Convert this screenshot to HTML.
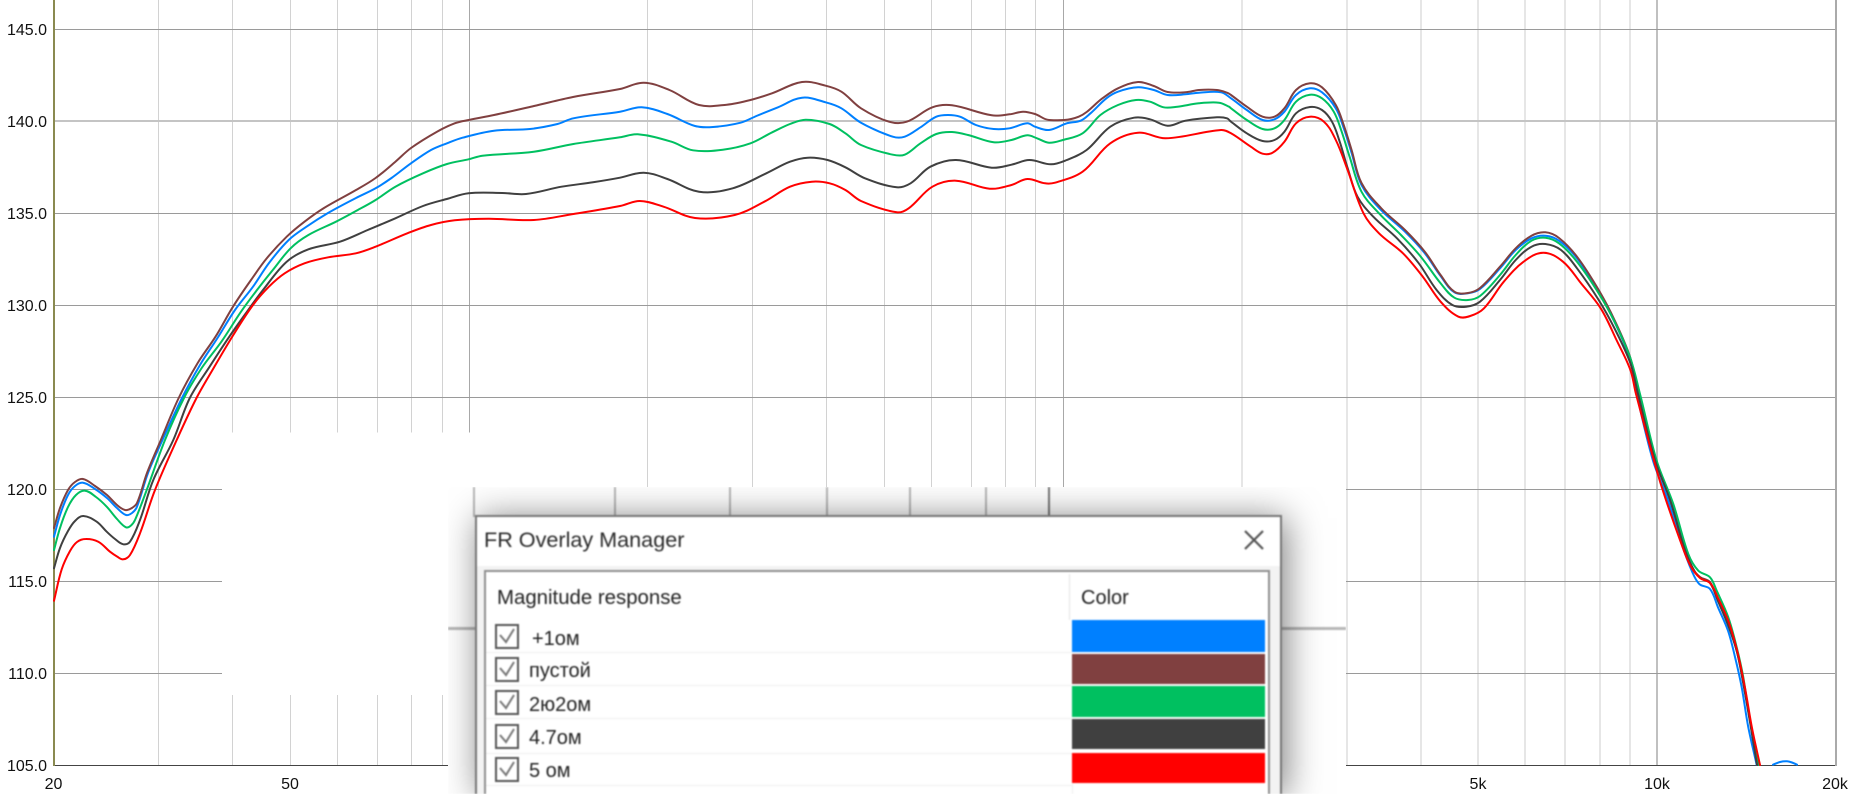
<!DOCTYPE html>
<html><head><meta charset="utf-8">
<style>
html,body{margin:0;padding:0;background:#fff;width:1851px;height:794px;overflow:hidden;font-family:"Liberation Sans",sans-serif}
#c{position:absolute;left:0;top:0}
#c text{font-family:"Liberation Sans",sans-serif;font-size:16px;fill:#111}
#b{position:absolute;left:448px;top:487px;width:898px;height:307px;overflow:hidden;background:#fff}
#bi{position:absolute;left:0;top:0;width:898px;height:307px;filter:blur(.7px);overflow:hidden}
.l{position:absolute;background:#b8b8b8}
#d{position:absolute;left:27px;top:28px;width:807px;height:279px;background:#fff;border:2px solid #777;border-bottom:0;box-sizing:border-box;box-shadow:4px 3px 34px rgba(0,0,0,.5)}
#s{position:absolute;left:0;top:49px;width:803px;height:228px;background:#f3f3f3}
#t{position:absolute;left:7px;top:10px;font-size:21.6px;line-height:25px;color:#2a2a2a;white-space:nowrap}
#list{position:absolute;left:7px;top:53px;width:786px;height:224px;background:#fff;border:2px solid #909090;border-bottom:0;box-sizing:border-box}
.tx{position:absolute;white-space:nowrap;color:#222}
.sw{position:absolute;left:586px;width:193px}
.sep{position:absolute;left:0;width:586px;height:1px;background:#eee}
.cb{position:absolute;left:9px;width:24px;height:25px;box-sizing:border-box;border:2px solid #555;background:#fff}
.cb svg{position:absolute;left:1px;top:1px}
</style></head><body>
<svg id="c" width="1851" height="794" viewBox="0 0 1851 794" xmlns="http://www.w3.org/2000/svg">
<g stroke="#d2d2d2" stroke-width="1" shape-rendering="crispEdges">
<path d="M158.5 0V765M232.5 0V765M290.5 0V765M337.5 0V765M377.5 0V765M411.5 0V765M442.5 0V765M647.5 0V765M752.5 0V765M826.5 0V765M884.5 0V765M931.5 0V765M971.5 0V765M1005.5 0V765M1035.5 0V765"/>
<path stroke="#a8a8a8" d="M469.5 0V765M1063.5 0V765"/>
</g>
<g stroke="#e6e6e6" stroke-width="2" shape-rendering="crispEdges">
<path d="M1242 0V765M1347 0V765M1421 0V765M1478 0V765M1525 0V765M1565 0V765M1600 0V765M1630 0V765"/>
<path stroke="#c0c0c0" d="M1657 0V765"/>
</g>
<g stroke="#9a9a9a" stroke-width="1" shape-rendering="crispEdges">
<path d="M54 29.5H1836M54 213.5H1836M54 305.5H1836M54 397.5H1836M54 489.5H1836M54 581.5H1836M54 673.5H1836"/>
<path stroke="#c4c4c4" stroke-width="2" d="M54 121H1836"/>
<path stroke="#444" stroke-width="1" d="M54 765.5H1836"/>
<path stroke="#8a8a50" stroke-width="2" d="M54 0V766"/>
<path stroke="#aaa" stroke-width="2" d="M1836 0V766"/>
</g>
<rect x="222" y="432.5" width="300" height="262.5" fill="#fff"/>
<g>
<text x="47" y="35" text-anchor="end">145.0</text>
<text x="47" y="127" text-anchor="end">140.0</text>
<text x="47" y="219" text-anchor="end">135.0</text>
<text x="47" y="311" text-anchor="end">130.0</text>
<text x="47" y="403" text-anchor="end">125.0</text>
<text x="47" y="495" text-anchor="end">120.0</text>
<text x="47" y="587" text-anchor="end">115.0</text>
<text x="47" y="679" text-anchor="end">110.0</text>
<text x="47" y="771" text-anchor="end">105.0</text>
<text x="53.5" y="789" text-anchor="middle">20</text>
<text x="290" y="789" text-anchor="middle">50</text>
<text x="1478" y="789" text-anchor="middle">5k</text>
<text x="1657" y="789" text-anchor="middle">10k</text>
<text x="1835" y="789" text-anchor="middle">20k</text>
</g>
<g id="curves" fill="none" stroke-width="2" stroke-linejoin="round" stroke-linecap="round">
<polyline stroke="#0080ff" points="54,536.7 60,515 68,495 75,486 83,482.7 95,489 107,498 117,508 126,515 132,513 137,506.7 148,473 161.7,441.7 182,398 200,365 217.5,338 235,310 253,286.7 269,263 288.7,240 306.5,226.7 328,213 356,198 375.6,188.3 391.5,178 411,163.3 431,150 447,143.3 462.6,137.7 494,130.7 530,129 557.5,124 573.4,118.3 620,111.7 641.7,107.3 667.4,114 695,126 713,127 740.6,122.7 756.4,116 778,107.3 802,97.7 825.6,102.3 841.4,108.3 861,122.7 892.8,136.7 904.7,136.7 920.5,127.3 936.3,116.7 948,115 960,116.7 975.9,125 993.7,129 1009.5,128.3 1027.3,123.3 1035,126.7 1049,130 1066.8,123.3 1080.6,120.7 1090.5,113.3 1106.4,98.3 1118,91.7 1138,87.3 1153.8,90 1167.6,95 1185.4,94.3 1199,92.7 1221,92.3 1231,98.3 1246.8,110 1262.6,120 1274.5,119.3 1284.4,111.7 1296,95 1310,88.3 1322,92.3 1335.8,108.3 1343.7,128 1351.6,153 1361.5,185 1381,210 1405,231.7 1424.8,253.3 1440.6,276 1454.4,292.3 1468,293.3 1480,289 1500,268.3 1515.7,250 1531.5,238.3 1545.4,235.7 1559,240.7 1577,258.3 1598.7,291.7 1614.5,321.7 1630.4,360 1636.7,394 1653,460.7 1667,497.3 1681.7,544 1691.7,570.7 1699.3,584 1710,589 1718,607.3 1728,630.7 1735,657 1741.7,687.3 1748.3,727.3 1756.7,765"/>
<polyline stroke="#0080ff" points="1773,764.7 1780,762 1787,761.3 1792,762.5 1797,764.7"/>
<polyline stroke="#804040" points="54,528 60,508 68,490 75,482 83,479 95,486 107,495 117,505 125,510 131,508.5 137,503 147,473 160,442 178.7,398 197.7,363 215.5,336.7 233,306.7 251,280 267,258 286.7,236.7 304.5,221.7 324,208 356,190 375.6,178 395.4,161.7 411,148 437,131.7 454.7,123.3 468.6,120 494,115 534,106 573,97 620,89 643.7,82.7 669.4,90 699,105 726.8,104.7 750.5,100 772,93.3 802,82 825.6,85.7 841.4,91.7 861,108.3 889,121.7 906.7,121.7 932.4,107.3 952,105.3 991.7,115.3 1009.5,114.3 1023,111.7 1035,114 1049,120 1078.7,116.7 1102.4,98.3 1118,88.3 1138,82 1153.8,86 1167.6,92 1185.4,92.3 1199,90 1217,90 1227,92.7 1231,95 1246.8,106.7 1262.6,116.7 1274.5,116.7 1284.4,108.3 1296,90 1310,83.3 1322,87.3 1335.8,105 1343.7,125 1351.6,150 1361.5,183 1381,208 1405,230 1424.8,251.7 1440.6,275 1454.4,291.7 1468,293 1480,288 1500,266.7 1515.7,248.3 1531.5,235.7 1545.4,232.3 1559,238 1577,256.7 1598.7,290 1614.5,320 1630.4,358 1638.3,394 1655,460.7 1670,497 1685,550.7 1693,569 1700,577 1710,582 1718,600.7 1728,624 1736.7,650.7 1743,680.7 1750,720.7 1758,765"/>
<polyline stroke="#00c060" points="54,550 60,528 68,507 76,495 85,490.7 96,497 106.7,506.7 117,519 126,527.3 131,525.5 135,520 146.7,490 165,440 184,398 201.7,368 221.4,341.7 241,311.7 257,290 272.8,270 290.6,248.3 308.4,235 336,221.7 357.8,210 375.6,200 395.4,186.7 423,173.3 447,164 468.6,159.3 482.4,155.7 533.8,151.7 573.4,144 620,137.3 637.8,134.3 671.4,141.7 693,150.3 722.8,149.7 750.5,143.3 772.2,132.3 790,124 805.8,119.7 829.6,124 845.4,133.3 861,145 892.8,154.7 904.7,154.7 920.5,143.3 936.3,134 952,132 968,135 993.7,142.3 1011.5,140 1027.3,135.3 1037,138.3 1049,142.7 1062.8,140 1082.6,133.3 1100.4,115 1118,105 1136,100 1150,101.7 1163.7,107.3 1177.5,106.7 1199,103.3 1219,102.7 1229,106.7 1231,108.3 1246.8,120 1262.6,129 1274.5,128.3 1284.4,120 1296,101.7 1310,94.7 1322,98.3 1333.8,111.7 1341.7,131.7 1349.6,156.7 1361.5,191.7 1379,213.3 1401,235 1420.8,256.7 1440.6,283.3 1454.4,297.7 1468,300 1480,296 1500,275 1515.7,255 1531.5,240.7 1545.4,237.7 1559,243.3 1577,261.7 1598.7,293.3 1614.5,321.7 1630.4,358.3 1640,394 1656.7,460.7 1673.3,504 1688.3,554 1698.3,570.7 1710,577.3 1716.7,590.7 1728.3,617.3 1736.7,647.3 1743.3,677.3 1750,720.7 1759,765"/>
<polyline stroke="#404040" points="54,568.3 60,548 68,531 75,521 83.3,516 96.7,521.7 106.7,531.7 115,539 123.3,544.3 130,541.7 140,520 153.3,480 173.3,440 189.8,398 209.6,366.7 229.3,336.7 247,311.7 263,290 286.7,261.7 308.4,249.3 340,241.7 367.7,230 395.4,218.3 423,206 446.8,199 468.6,193.3 502.2,193 526,194 561.5,186.7 593,182.3 620,177.7 643.7,172.7 667.4,179 699,191.7 732.7,188.3 766.3,173.3 790,161.7 807.8,157.7 827.6,160 845.4,167.3 865,178.3 896.8,187.3 910.6,183.3 930.4,166.7 956,160 991.7,167.7 1011.5,164.7 1029.3,160 1051,164.3 1066.8,160 1086.6,150 1110.3,126.7 1134,117.7 1150,119.3 1167.6,125.7 1185.4,120.7 1217,117.3 1227,118.3 1231,121.7 1246.8,133.3 1262.6,141 1274.5,140 1284.4,131.7 1296,113.3 1310,107 1322,110 1332,121.7 1339.7,141.7 1347.6,168 1357.5,196.7 1373.3,216.7 1397,238.3 1418.8,263.3 1436.6,290 1452.4,305 1466.3,306.7 1480,301.7 1500,280 1515.7,260 1531.5,246.7 1545.4,244 1561,250 1577,268.3 1598.7,300 1614.5,328.3 1630.4,363.3 1638,394 1655,460 1670,500 1685,550 1695,572 1702,579 1710,583 1718,601 1728,625 1737,652 1743,682 1750,722 1757,765"/>
<polyline stroke="#ff0000" points="54,600.7 61.7,569.3 70,551 77,542 85.7,539 98.3,541.7 110,551.7 117,556.5 123.3,559.3 130,555 140,533.3 155,490 176.7,440 196.5,398 213.5,368.3 233.3,335 253,305 268.9,286.7 284.7,273.3 304.5,263.3 328.2,257.3 355.9,253.3 375.6,246.7 407.3,233.3 431,225 454.7,220.3 488.3,218.7 533.8,220 573.4,214 620,206 639.8,201 663.5,206.7 695,218 734.7,215 764.3,201.7 790,186.7 811.8,181.7 829.6,183.3 845.4,190 861,201 896.8,212.3 908.7,208.3 932.4,186.7 956,180.7 989.7,188.7 1011.5,185 1027.3,179 1045,183.3 1055,182.7 1082.6,171.7 1110.3,143.3 1138,132.7 1165.7,138.3 1221,130 1231,133.3 1250.8,146.7 1262.6,153.7 1272.5,152.7 1284.4,141.7 1296,123.3 1310,116.7 1324,121.7 1335.8,140 1347.6,170 1363.5,213.3 1379,233.3 1403,253.3 1422.8,276.7 1440.6,301.7 1458.4,316.7 1470.2,316 1484,308.3 1503.8,281.7 1523.6,261.7 1543.4,252.7 1563,261.7 1581,283.3 1600.7,308.3 1616.5,340 1630.4,370 1636,394 1656,468 1665,497 1680,540 1690,565 1700,578 1710,583 1718,598 1728,620 1737,650 1745,688 1752,728 1760,765"/>
</g>
</svg>
<div id="b"><div id="bi">
<div class="l" style="left:25px;top:0;width:2px;height:30px"></div>
<div class="l" style="left:166px;top:0;width:2px;height:30px"></div>
<div class="l" style="left:281px;top:0;width:2px;height:30px"></div>
<div class="l" style="left:378px;top:0;width:2px;height:30px"></div>
<div class="l" style="left:461px;top:0;width:2px;height:30px"></div>
<div class="l" style="left:537px;top:0;width:2px;height:30px"></div>
<div class="l" style="left:600px;top:0;width:2px;height:30px;background:#777"></div>
<div class="l" style="left:0;top:140px;width:30px;height:3px"></div>
<div class="l" style="left:830px;top:140px;width:68px;height:3px"></div>
<div id="d">
<div id="s"></div>
<div id="t">FR Overlay Manager</div>
<svg style="position:absolute;left:766px;top:12px" width="22" height="22"><path d="M2 2L20 20M20 2L2 20" stroke="#555" stroke-width="2.2" fill="none"/></svg>
<div id="list">
<div class="tx" style="left:11px;top:14px;font-size:20.4px;line-height:24px">Magnitude response</div>
<div class="tx" style="left:595px;top:14px;font-size:20px;line-height:24px">Color</div>
<div style="position:absolute;left:583px;top:2px;width:1px;height:46px;background:#e4e4e4"></div>
<div style="position:absolute;left:586px;top:212px;width:1px;height:10px;background:#eee"></div>
<div class="sw" style="top:48px;height:32px;background:#0080ff"></div>
<div class="sw" style="top:82px;height:30px;background:#804040"></div>
<div class="sw" style="top:114px;height:31px;background:#00c060"></div>
<div class="sw" style="top:147px;height:30px;background:#404040"></div>
<div class="sw" style="top:181px;height:30px;background:#ff0000"></div>
<div class="sep" style="top:80px"></div>
<div class="sep" style="top:113px"></div>
<div class="sep" style="top:146px"></div>
<div class="sep" style="top:181px"></div>
<div class="sep" style="top:213px"></div>
<div class="cb" style="top:52px"><svg width="18" height="19"><path d="M2 8L8 15L16 2" fill="none" stroke="#777" stroke-width="2"/></svg></div>
<div class="cb" style="top:85px"><svg width="18" height="19"><path d="M2 8L8 15L16 2" fill="none" stroke="#777" stroke-width="2"/></svg></div>
<div class="cb" style="top:118px"><svg width="18" height="19"><path d="M2 8L8 15L16 2" fill="none" stroke="#777" stroke-width="2"/></svg></div>
<div class="cb" style="top:152px"><svg width="18" height="19"><path d="M2 8L8 15L16 2" fill="none" stroke="#777" stroke-width="2"/></svg></div>
<div class="cb" style="top:185px"><svg width="18" height="19"><path d="M2 8L8 15L16 2" fill="none" stroke="#777" stroke-width="2"/></svg></div>
<div class="tx" style="left:46px;top:55px;font-size:20px;line-height:24px">+1ом</div>
<div class="tx" style="left:43px;top:87px;font-size:20px;line-height:24px">пустой</div>
<div class="tx" style="left:43px;top:121px;font-size:20px;line-height:24px">2ю2ом</div>
<div class="tx" style="left:43px;top:154px;font-size:20px;line-height:24px">4.7ом</div>
<div class="tx" style="left:43px;top:187px;font-size:20px;line-height:24px">5 ом</div>
</div>
</div>
</div></div>
<script>
(function(){
var ns="http://www.w3.org/2000/svg",g=document.getElementById("curves");
Array.prototype.slice.call(g.querySelectorAll("polyline")).forEach(function(el){
var pts=el.getAttribute("points").trim().split(/\s+/).map(function(s){return s.split(",").map(Number)});
var n=pts.length,tan=[];
for(var i=0;i<n;i++){var a=pts[Math.max(i-1,0)],b=pts[Math.min(i+1,n-1)],dx=b[0]-a[0],dy=b[1]-a[1],m=Math.sqrt(dx*dx+dy*dy)||1;tan.push([dx/m,dy/m]);}
var d="M"+pts[0][0]+" "+pts[0][1];
for(var j=0;j<n-1;j++){var p=pts[j],q=pts[j+1],l=Math.sqrt(Math.pow(q[0]-p[0],2)+Math.pow(q[1]-p[1],2))*.35;
d+="C"+(p[0]+tan[j][0]*l).toFixed(1)+" "+(p[1]+tan[j][1]*l).toFixed(1)+" "+(q[0]-tan[j+1][0]*l).toFixed(1)+" "+(q[1]-tan[j+1][1]*l).toFixed(1)+" "+q[0]+" "+q[1];}
var path=document.createElementNS(ns,"path");path.setAttribute("d",d);path.setAttribute("stroke",el.getAttribute("stroke"));
g.replaceChild(path,el);
});
})();
</script>
</body></html>
